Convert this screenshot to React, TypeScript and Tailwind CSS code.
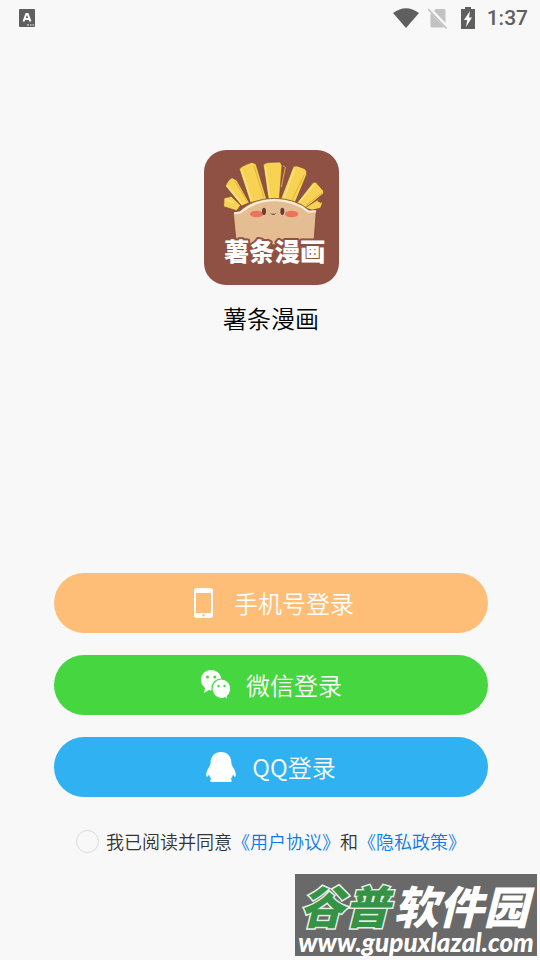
import type { ReactNode } from "react";

const loginOptions = [
  { label: "手机号登录", color: "bg-[#ffbe78]", icon: <PhoneIcon /> },
  { label: "微信登录", color: "bg-[#46d640]", icon: <WechatIcon /> },
  { label: "QQ登录", color: "bg-[#30b2f2]", icon: <QQIcon /> }
];

const fries = [
  "M84 168 L106 163 L134 190 L122 206 L83 194 Z",
  "M88 132 Q96 112 108 107 L122 114 L160 182 L137 192 Z",
  "M130 82 Q134 72 168 61 L180 66 L212 172 L163 182 Z",
  "M202 70 Q203 62 224 61 L252 60 L258 70 L250 172 L217 172 Z",
  "M290 78 Q292 70 304 72 L326 80 Q334 86 332 98 L297 182 L254 172 Z",
  "M349 124 Q354 118 360 121 L382 146 L383 154 L330 198 L302 184 Z",
  "M382 162 L365 176 L374 182 L381 178 L374 198 L348 205 L328 197 Z"
];

function AppLogo() {
  return (
    <svg viewBox="24 24 405 405" className="size-[135px]" role="img" aria-label="薯条漫画">
      <rect x="24" y="24" width="405" height="405" rx="66" fill="#8f5143" />
      <g fill="#f7d253" stroke="#7c4635" strokeWidth="2" strokeLinejoin="round">
        {fries.map((d) => (
          <path key={d} d={d} />
        ))}
      </g>
      <g fill="none" stroke="#fbe58a" strokeWidth="4" strokeLinecap="round">
        <path d="M94 132 L136 184 M136 84 L166 174 M208 74 L221 164 M295 82 L265 166 M352 130 L310 180 M90 172 L112 182" />
      </g>
      <g fill="none" stroke="#e3b03a" strokeWidth="3" strokeLinecap="round">
        <path d="M116 116 L154 178 M174 72 L203 165 M262 72 L268 76 L256 134 M325 98 L288 174 M376 154 L328 192" />
      </g>
      <path
        d="M112 211 L131 208 Q168 169 235 169 Q302 170 340 205 L363 204 L360 216 L354 298 L350 308 H128 L120 296 L113 224 Z"
        fill="#e4bd92"
        stroke="#70402f"
        strokeWidth="2"
        strokeLinejoin="round"
      />
      <path d="M117 214 L134 211 Q174 176 235 174 Q298 176 337 209 L357 208" fill="none" stroke="#fff0d5" strokeWidth="6" strokeLinecap="round" />
      <ellipse cx="182" cy="216" rx="20" ry="10" fill="#e9745a" />
      <ellipse cx="287" cy="216" rx="20" ry="10" fill="#e9745a" />
      <ellipse cx="204" cy="208" rx="6" ry="11" fill="#6d3b33" />
      <ellipse cx="259" cy="208" rx="6" ry="11" fill="#6d3b33" />
      <path d="M225 215 Q228 220 231 216 Q234 220 238 215" fill="none" stroke="#6d3b33" strokeWidth="3" strokeLinecap="round" />
      <text
        x="236"
        y="358"
        textAnchor="middle"
        fontSize="76"
        fontWeight="900"
        fill="#ffffff"
        stroke="#8f5143"
        strokeWidth="12"
        strokeLinejoin="round"
        paintOrder="stroke"
      >
        薯条漫画
      </text>
    </svg>
  );
}

function PhoneIcon() {
  return (
    <svg viewBox="0 0 30 30" className="size-[30px]" aria-hidden="true">
      <path
        fill="#fff"
        fillRule="evenodd"
        d="M9 0H22A3 3 0 0 1 25 3V27A3 3 0 0 1 22 30H9A3 3 0 0 1 6 27V3A3 3 0 0 1 9 0ZM8 5V25H23V5ZM15.500 26A1.200 1.200 0 1 0 15.500 28.400A1.200 1.200 0 1 0 15.500 26Z"
      />
    </svg>
  );
}

function WechatIcon() {
  return (
    <svg viewBox="0 0 30 30" className="size-[30px]" aria-hidden="true">
      <path fill="#fff" d="M11 0C5.200 0 1 4.300 1 10C1 13.300 2.500 16 5.200 18L4 23L9 20C15 22 21.500 17 21.500 10.500C21.500 4.500 17 0 11 0Z" />
      <path
        fill="#fff"
        stroke="#46d640"
        strokeWidth="1.200"
        d="M21.200 9C16 9 12 13.200 12 18.500C12 24 16.200 28.500 21.400 28.500C22.700 28.500 23.900 28.200 24.900 27.800L27.600 30L27.200 26.300C29.400 24.600 30.800 21.800 30.800 18.500C30.800 13.200 26.600 9 21.200 9Z"
      />
      <g fill="#46d640">
        <circle cx="7.500" cy="7" r="1.500" />
        <circle cx="14.800" cy="7" r="1.500" />
        <circle cx="18.500" cy="16" r="1.200" />
        <circle cx="24.500" cy="16" r="1.200" />
      </g>
    </svg>
  );
}

function QQIcon() {
  return (
    <svg viewBox="0 0 30 30" className="size-[30px]" aria-hidden="true">
      <path
        fill="#fff"
        d="M15 0C8.500 0 4.500 4.500 4.600 11C4.500 13 3.500 14.200 2.500 16C.7 19 0 21.500 .3 24C.5 25.500 1.700 24.800 3 22.500C3.500 24.500 4.500 26 5.500 27C3.800 27.800 3.700 30 6 30H24C26.300 30 26.200 27.800 24.500 27C25.500 26 26.500 24.500 27 22.500C28.300 24.800 29.500 25.500 29.700 24C30 21.500 29.300 19 27.500 16C26.500 14.200 25.500 13 25.400 11C25.500 4.500 21.500 0 15 0Z"
      />
    </svg>
  );
}

function StatusBar() {
  return (
    <header className="flex h-9 items-center px-3 text-[#5f5f5f]">
      <svg viewBox="0 0 16 18" className="ml-[7px] h-[18px] w-4" aria-hidden="true">
        <rect width="16" height="18" rx="1" fill="#5f5f5f" />
        <path d="M4.500 12.500L7.300 5H8.700L11.500 12.500M5.600 10H10.400" fill="none" stroke="#fff" strokeWidth="2" />
        <path d="M8 16H10M11 16H12.500M13.500 16H15" stroke="#fff" strokeWidth="1.200" />
      </svg>
      <div className="ml-auto flex items-center">
        <svg viewBox="0 0 26 21" className="h-[21px] w-[26px]" aria-hidden="true">
          <path d="M0 5Q13 -4.500 26 5L13 20Z" fill="#5f5f5f" />
        </svg>
        <svg viewBox="0 0 20 22" className="ml-[9px] h-[22px] w-5" aria-hidden="true">
          <path d="M8 2H16A1.500 1.500 0 0 1 17.500 3.500V19A1.500 1.500 0 0 1 16 20.500H4A1.500 1.500 0 0 1 2.500 19V7Z" fill="#c2c2c2" />
          <path d="M1 1.500L19.500 21" stroke="#f8f8f8" strokeWidth="4" />
          <path d="M0 2L18.500 21.500" stroke="#bdbdbd" strokeWidth="1.500" />
        </svg>
        <svg viewBox="0 0 14 22" className="ml-[13px] h-[22px] w-3.5" aria-hidden="true">
          <path d="M4 0H10V2H14V22H0V2H4Z" fill="#5f5f5f" />
          <path d="M9 4L3 13H6.200L5 20L11 10.500H8Z" fill="#fff" />
        </svg>
        <time className="ml-3 font-['Roboto',sans-serif] text-[21px] leading-6 font-medium">1:37</time>
      </div>
    </header>
  );
}

function LoginButton({ color, icon, children }: { color: string; icon: ReactNode; children: ReactNode }) {
  return (
    <button type="button" className={`flex h-[60px] w-full items-center justify-center gap-4 rounded-full text-2xl text-white ${color}`}>
      {icon}
      <span>{children}</span>
    </button>
  );
}

function Watermark() {
  return (
    <div className="absolute right-[3px] bottom-1 flex h-[82px] w-[242px] flex-col items-center bg-[#696969] pt-1.5 text-white">
      <div className="flex gap-1 pr-1 text-[45px] leading-[50px] font-black italic">
        <span className="text-[#349344] [-webkit-text-stroke:3px_#e6efe6] [paint-order:stroke]">谷普</span>
        <span>软件园</span>
      </div>
      <a href="#" className="font-['Lato',sans-serif] text-[26px] leading-6 font-black italic">
        www.gupuxlazal.com
      </a>
    </div>
  );
}

export default function App() {
  return (
    <div lang="zh-CN" className="relative flex min-h-screen flex-col bg-[#f8f8f8] font-['Noto_Sans_CJK_SC',sans-serif] font-[350] text-black">
      <StatusBar />
      <main className="flex flex-1 flex-col items-center pt-[114px] pr-[52px] pb-[105px] pl-[54px]">
        <AppLogo />
        <h1 className="mt-4 text-2xl leading-[34px] font-[350]">薯条漫画</h1>
        <div className="mt-auto flex w-full flex-col gap-[22px]">
          {loginOptions.map((option) => (
            <LoginButton key={option.label} color={option.color} icon={option.icon}>
              {option.label}
            </LoginButton>
          ))}
        </div>
        <div className="mt-[30px] flex items-center text-lg leading-7 text-[#333333]">
          <input
            id="agree"
            type="checkbox"
            className="mr-[7px] size-[23px] appearance-none rounded-full border border-[#dadada] checked:border-[#0a7be6] checked:bg-[#0a7be6]"
          />
          <label htmlFor="agree">我已阅读并同意</label>
          <a href="#" className="text-[#0a7be6]">《用户协议》</a>
          <span>和</span>
          <a href="#" className="text-[#0a7be6]">《隐私政策》</a>
        </div>
      </main>
      <Watermark />
    </div>
  );
}
